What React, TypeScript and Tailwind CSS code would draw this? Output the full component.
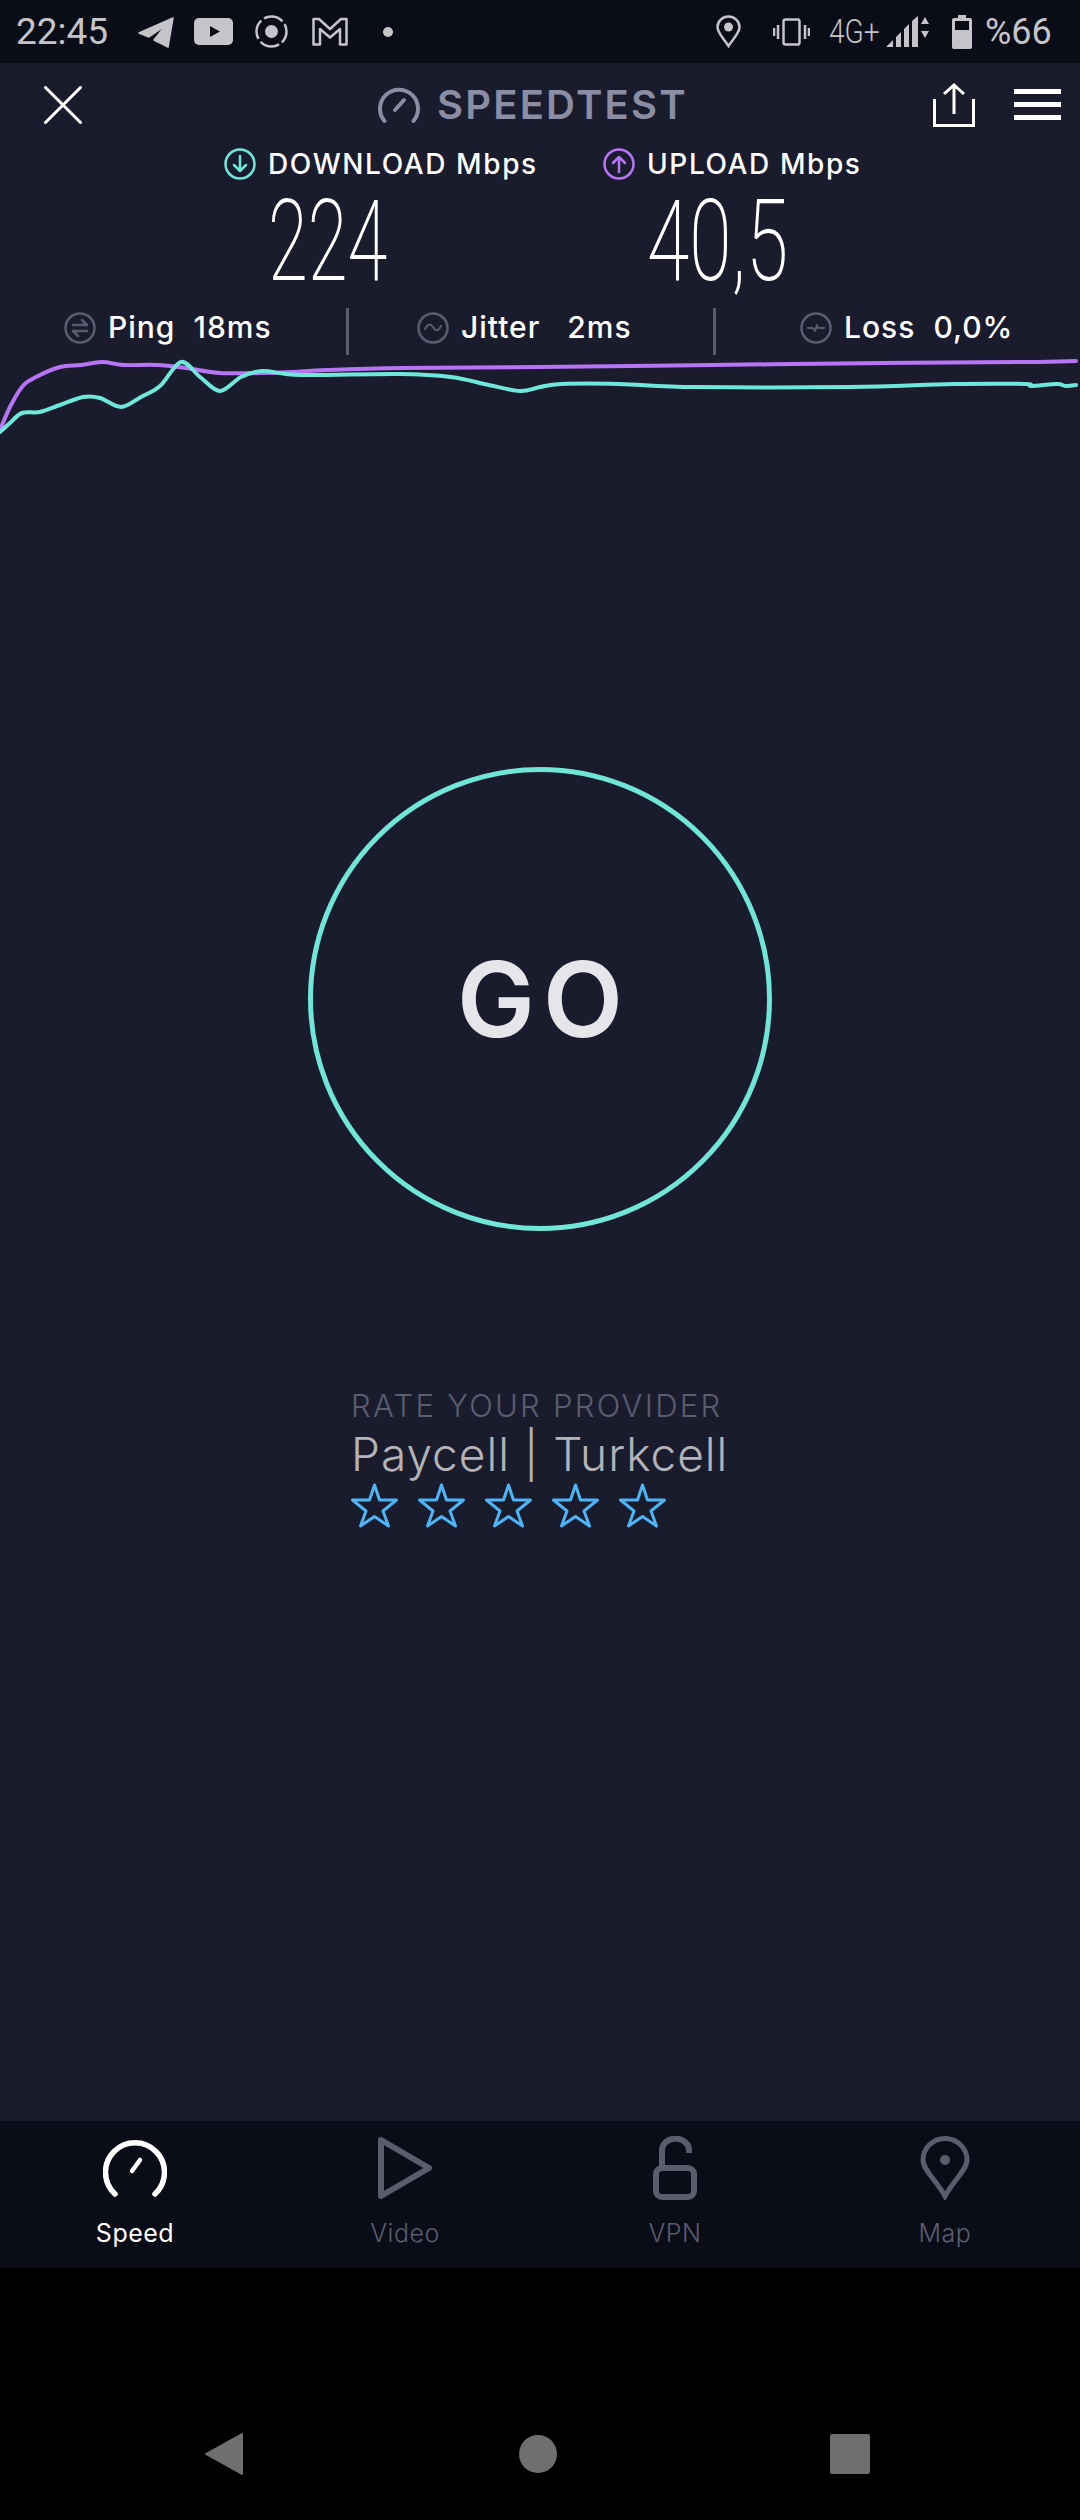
const FONT = "font-['Inter',sans-serif]";

const PURPLE_POINTS: number[][] = [
  [0, 430], [10, 407], [22, 387], [34, 378], [60, 367], [81, 365], [102, 362], [124, 365], [157, 365],
  [186, 368], [220, 373], [262, 373], [293, 372], [327, 370], [403, 368], [540, 367], [712, 365],
  [884, 363], [1026, 362], [1076, 361],
];

const TEAL_POINTS: number[][] = [
  [0, 432], [10, 423], [22, 413], [40, 412], [60, 405], [83, 397], [100, 398], [121, 407], [141, 397],
  [160, 386], [181, 362], [200, 377], [220, 391], [241, 377], [262, 371], [286, 374], [317, 375],
  [399, 374], [451, 377], [489, 385], [520, 391], [540, 387], [561, 384], [619, 384], [695, 387],
  [850, 387], [953, 384], [1025, 384], [1031, 386], [1057, 384], [1066, 386], [1076, 385],
];

// catmull-rom through the points, y shifted so the svg starts at 355
function smoothPath(points: number[][]) {
  const p = points.map(([x, y]) => [x, y - 355]);
  let d = `M${p[0][0]} ${p[0][1]}`;
  for (let i = 0; i < p.length - 1; i++) {
    const a = p[Math.max(i - 1, 0)];
    const b = p[i];
    const c = p[i + 1];
    const e = p[Math.min(i + 2, p.length - 1)];
    const c1x = b[0] + (c[0] - a[0]) / 6;
    const c1y = b[1] + (c[1] - a[1]) / 6;
    const c2x = c[0] - (e[0] - b[0]) / 6;
    const c2y = c[1] - (e[1] - b[1]) / 6;
    d += ` C${c1x} ${c1y} ${c2x} ${c2y} ${c[0]} ${c[1]}`;
  }
  return d;
}

function StatusBar() {
  return (
    <div className="flex h-[63px] items-center bg-[#0a0c18] text-[#c5c5c9] font-['Roboto',sans-serif]">
      <span className="ml-4 w-[92px] text-[37px] leading-none">22:45</span>
      <svg className="ml-[30px]" width="36" height="32" viewBox="0 0 36 32" fill="#c5c5c9" stroke="#c5c5c9" strokeWidth="1.5" strokeLinejoin="round">
        <path d="M1 17 L35 2 L30 31 L16 24 L27 10 L11 21 Z" />
      </svg>
      <svg className="ml-5" width="39" height="27" viewBox="0 0 39 27">
        <rect width="39" height="27" rx="5" fill="#c5c5c9" />
        <path d="M16 8 L26 13.5 L16 19 Z" fill="#0a0c18" />
      </svg>
      <svg className="ml-[22px]" width="33" height="33" viewBox="0 0 33 33" fill="none" stroke="#c5c5c9" strokeWidth="2.5">
        <circle cx="16.5" cy="16.5" r="15" strokeDasharray="20 3.5" strokeDashoffset="8" />
        <circle cx="16.5" cy="16.5" r="6.5" fill="#c5c5c9" stroke="none" />
      </svg>
      <svg className="ml-6" width="36" height="29" viewBox="0 0 36 29" fill="none" stroke="#c5c5c9" strokeWidth="2.5" strokeLinejoin="round">
        <path d="M1.5 2 H7 L18 12 L29 2 H34.5 V27.5 H28 V12 L18 20.5 L8 12 V27.5 H1.5 Z" />
      </svg>
      <div className="ml-[35px] h-[10px] w-[10px] rounded-full bg-[#c5c5c9]" />
      <svg className="ml-[323px]" width="25" height="33" viewBox="0 0 25 33" fill="none" stroke="#c5c5c9" strokeWidth="2.5">
        <path d="M12.5 31 C8 24 1.5 18 1.5 12 A11 10.5 0 0 1 23.5 12 C23.5 18 17 24 12.5 31 Z" />
        <circle cx="12.5" cy="12" r="4.5" fill="#c5c5c9" stroke="none" />
      </svg>
      <svg className="ml-8" width="37" height="28" viewBox="0 0 37 28" fill="none" stroke="#c5c5c9">
        <rect x="10.5" y="1.5" width="16" height="25" rx="2" strokeWidth="2.5" />
        <path d="M5 7 V21 M1 10 V18 M32 7 V21 M36 10 V18" strokeWidth="2.5" />
      </svg>
      <span className="ml-[19px] w-[50px] origin-left scale-x-[0.85] text-[33px] leading-none font-light whitespace-nowrap">4G+</span>
      <svg className="ml-[7px]" width="45" height="33" viewBox="0 0 45 33" fill="#c5c5c9">
        <path d="M0 32 L7 25 V32 Z M10 22 L15 17 V32 H10 Z M18 14 L23 9 V32 H18 Z M26 6 L32 1 V32 H26 Z" />
        <path d="M35 9 L39 2 L43 9 Z M35 16 H43 L39 23 Z" />
      </svg>
      <svg className="ml-[21px]" width="20" height="34" viewBox="0 0 20 34">
        <path d="M6 0 H14 V3 H18 Q20 3 20 5 V32 Q20 34 18 34 H2 Q0 34 0 32 V5 Q0 3 2 3 H6 Z" fill="#c5c5c9" />
        <rect x="3" y="6" width="14" height="9" fill="#0a0c18" />
      </svg>
      <span className="ml-[13px] text-[36px] leading-none">%66</span>
    </div>
  );
}

function Header() {
  return (
    <div className="flex h-[83px] items-center">
      <svg className="ml-[44px]" width="38" height="38" viewBox="0 0 38 38" stroke="#ffffff" strokeWidth="3" strokeLinecap="round">
        <path d="M1.5 1.5 L36.5 36.5 M36.5 1.5 L1.5 36.5" />
      </svg>
      <svg className="ml-[296px]" width="42" height="37" viewBox="0 0 42 37" fill="none" stroke="#8a8da3" strokeWidth="4" strokeLinecap="round">
        <path d="M6.5 35 A19 19 0 1 1 35.5 35" />
        <path d="M17 24 L26 14" />
      </svg>
      <span className={`ml-[17px] w-[248px] text-[40px] leading-none font-semibold tracking-[2.2px] whitespace-nowrap text-[#8a8da3] ${FONT}`}>SPEEDTEST</span>
      <svg className="ml-[248px]" width="42" height="44" viewBox="0 0 42 44" fill="none" stroke="#ffffff" strokeWidth="3">
        <path d="M1.5 16 V42.5 H40.5 V16" />
        <path d="M21 31 V3 M11 11 L21 2 L31 11" />
      </svg>
      <div className="ml-[39px] flex w-[47px] flex-col gap-[8px]">
        <div className="h-[5px] bg-white" />
        <div className="h-[5px] bg-white" />
        <div className="h-[5px] bg-white" />
      </div>
    </div>
  );
}

function RoundArrow({ up }: { up?: boolean }) {
  const color = up ? "#b774f5" : "#6fe8dc";
  return (
    <svg width="32" height="32" viewBox="0 0 32 32" fill="none" stroke={color} strokeWidth="2.5" strokeLinecap="round" strokeLinejoin="round">
      <circle cx="16" cy="16" r="14.5" />
      {up ? <path d="M16 24 V9 M10 15 L16 9 L22 15" /> : <path d="M16 8 V23 M10 17 L16 23 L22 17" />}
    </svg>
  );
}

function SpeedLabel({ up, label }: { up?: boolean; label: string }) {
  return (
    <div className="flex h-[32px] items-center gap-3">
      <RoundArrow up={up} />
      <span className={`text-[28px] leading-none font-medium tracking-[1.6px] whitespace-nowrap text-white ${FONT}`}>{label}</span>
    </div>
  );
}

function StatIcon({ children }: { children: React.ReactNode }) {
  return (
    <svg width="32" height="32" viewBox="0 0 32 32" fill="none" stroke="#5b5d6f" strokeWidth="2.5" strokeLinecap="round" strokeLinejoin="round">
      <circle cx="16" cy="16" r="14.5" />
      {children}
    </svg>
  );
}

function Stats() {
  return (
    <div className={`mt-[17px] flex h-[47px] items-center text-[30px] font-medium tracking-[1px] text-white ${FONT}`}>
      <div className="flex w-[346px] items-center pb-2 pl-[64px]">
        <StatIcon><path d="M9 13 H23 L18 8 M23 19 H9 L14 24" /></StatIcon>
        <span className="ml-3 whitespace-pre">Ping  18ms</span>
      </div>
      <div className="h-[47px] w-[3px] bg-[#5b5d6f]" />
      <div className="flex w-[364px] items-center pb-2 pl-[68px]">
        <StatIcon><path d="M8 17 C11 11 14 12 16 15 C18 19 21 20 24 14" strokeWidth="2" /></StatIcon>
        <span className="ml-3 whitespace-pre">Jitter   2ms</span>
      </div>
      <div className="h-[47px] w-[3px] bg-[#5b5d6f]" />
      <div className="flex items-center pb-2 pl-[84px]">
        <StatIcon><path d="M8 16 H13 L15 19 L17 13 L18 16 M20 16 H24" strokeWidth="2" /></StatIcon>
        <span className="ml-3 whitespace-pre">Loss  0,0%</span>
      </div>
    </div>
  );
}

function Stars() {
  return (
    <div className="mt-[2px] flex gap-[20px]">
      {[0, 1, 2, 3, 4].map((i) => (
        <svg key={i} width="47" height="45" viewBox="0 0 47 45" fill="none" stroke="#4db5f5" strokeWidth="3" strokeLinejoin="round">
          <path d="M23.5 2 L28.5 17 H45.5 L32 28 L37.5 43 L23.5 33.5 L9.5 43 L15 28 L1.5 17 H18.5 Z" />
        </svg>
      ))}
    </div>
  );
}

function TabItem({ label, active, children }: { label: string; active?: boolean; children: React.ReactNode }) {
  return (
    <div className="flex flex-col items-center">
      <div className="flex h-[70px] items-center justify-center">{children}</div>
      <span className={`mt-[18px] text-[25px] leading-none tracking-[0.5px] ${active ? "text-white" : "font-light text-[#5b5d6f]"} ${FONT}`}>{label}</span>
    </div>
  );
}

function TabBar() {
  return (
    <div className="grid h-[147px] grid-cols-4 bg-[#0a0c18] pt-[12px]">
      <TabItem label="Speed" active>
        <svg width="64" height="58" viewBox="0 0 64 58" fill="none" stroke="#ffffff" strokeWidth="5.5" strokeLinecap="round">
          <path d="M12 55 A29.5 29.5 0 1 1 52 55" />
          <path d="M29 32 L37 21" strokeWidth="4.5" />
        </svg>
      </TabItem>
      <TabItem label="Video">
        <svg width="54" height="62" viewBox="0 0 54 62" fill="none" stroke="#5b5d6f" strokeWidth="6" strokeLinejoin="round">
          <path d="M3 3 L51 31 L3 59 Z" />
        </svg>
      </TabItem>
      <TabItem label="VPN">
        <svg width="44" height="64" viewBox="0 0 44 64" fill="none" stroke="#5b5d6f" strokeWidth="6">
          <path d="M9 32 V14 A13 11 0 0 1 36 14 V17" />
          <rect x="3" y="32" width="38" height="29" rx="6" />
        </svg>
      </TabItem>
      <TabItem label="Map">
        <svg width="50" height="64" viewBox="0 0 50 64" fill="none" stroke="#5b5d6f" strokeWidth="5">
          <path d="M25 60 C17 45 3 34 3 24 A22 21.5 0 0 1 47 24 C47 34 33 45 25 60 Z" />
          <circle cx="25" cy="24" r="5" fill="#5b5d6f" stroke="none" />
        </svg>
      </TabItem>
    </div>
  );
}

export default function App() {
  return (
    <div className="flex h-[2520px] w-[1080px] flex-col bg-black">
      <StatusBar />
      <div className="flex h-[2058px] flex-col bg-[#1a1c2e]">
        <Header />
        <div className="mt-[2px] flex h-[32px] pl-[224px]">
          <div className="w-[379px]">
            <SpeedLabel label="DOWNLOAD Mbps" />
          </div>
          <SpeedLabel up label="UPLOAD Mbps" />
        </div>
        <div className="mt-[12px] flex h-[99px] items-center font-['Roboto',sans-serif] font-extralight text-white">
          <span className="ml-[268px] w-[119px] origin-left scale-x-[0.64] text-[113px] leading-[99px] whitespace-nowrap">224</span>
          <span className="ml-[260px] w-[138px] origin-left scale-x-[0.68] text-[113px] leading-[99px] whitespace-nowrap">40,5</span>
        </div>
        <Stats />
        <svg className="block" width="1080" height="80" viewBox="0 0 1080 80" fill="none" strokeWidth="4" strokeLinecap="round" strokeLinejoin="round">
          <path d={smoothPath(PURPLE_POINTS)} stroke="#b774f5" />
          <path d={smoothPath(TEAL_POINTS)} stroke="#6fe8dc" />
        </svg>
        <div className="mt-[332px] flex justify-center">
          <div className="flex h-[464px] w-[464px] items-center justify-center rounded-full border-[5px] border-[#6fe6d8]">
            <span className={`pl-[8px] text-[104px] leading-none font-semibold tracking-[8px] text-[#e6e6ea] ${FONT}`}>GO</span>
          </div>
        </div>
        <div className="mt-[157px] flex flex-col pl-[351px]">
          <span className={`text-[31px] leading-[36px] font-light tracking-[2.3px] whitespace-nowrap text-[#5b5d6f] ${FONT}`}>RATE YOUR PROVIDER</span>
          <span className={`mt-[3px] text-[46px] leading-[54px] font-light tracking-[1px] whitespace-nowrap text-[#b3b3b8] ${FONT}`}>Paycell | Turkcell</span>
          <Stars />
        </div>
      </div>
      <TabBar />
      <div className="flex flex-1 items-center justify-center pt-[120px] pr-[5px]">
        <div className="flex h-[42px] w-[665px] items-center justify-between">
          <svg width="38" height="42" viewBox="0 0 38 42" fill="#6f6f6f" stroke="#6f6f6f" strokeWidth="2" strokeLinejoin="round">
            <path d="M37 1 V41 L1 21 Z" />
          </svg>
          <div className="ml-[3px] h-[38px] w-[38px] rounded-full bg-[#6f6f6f]" />
          <div className="h-[40px] w-[40px] rounded-[2px] bg-[#6f6f6f]" />
        </div>
      </div>
    </div>
  );
}
